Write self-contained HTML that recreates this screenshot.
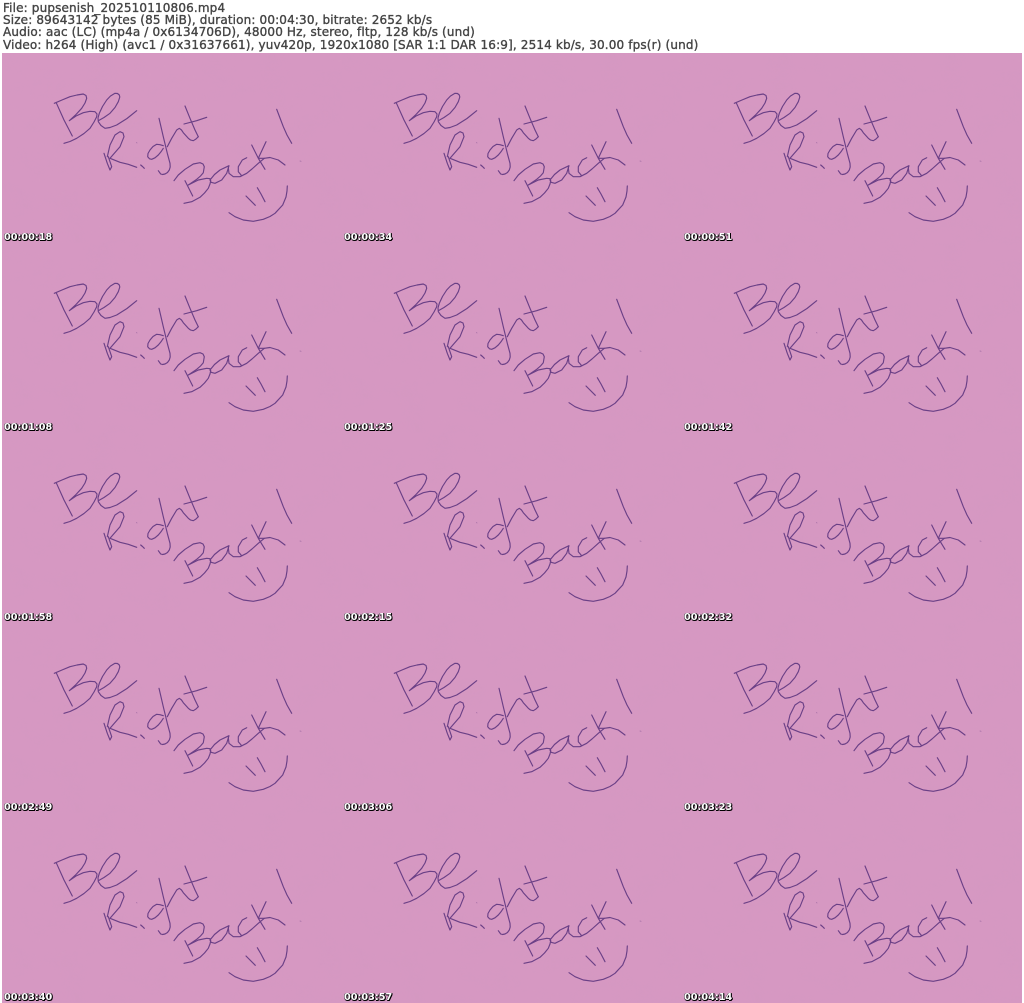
<!DOCTYPE html>
<html lang="en"><head><meta charset="utf-8"><title>pupsenish_202510110806.mp4 contact sheet</title>
<style>
html,body{margin:0;padding:0;background:#fff;width:1024px;height:1003px;overflow:hidden}
body{position:relative;font-family:"DejaVu Sans","Liberation Sans",sans-serif}
.h{position:absolute;left:3px;font-size:12px;line-height:12px;letter-spacing:.145px;color:#444;white-space:pre;-webkit-text-stroke:.35px #444}
svg{position:absolute;left:0;top:0}
.t{position:absolute;font-weight:bold;font-size:9.7px;line-height:12px;color:#fff;text-shadow:1px 1px 0 #000,0 1px 0 #000,1px 0 0 #000,-.5px 0 0 #333}
</style></head><body>
<div class="h" style="top:2px">File: pupsenish_202510110806.mp4</div>
<div class="h" style="top:14px">Size: 89643142 bytes (85 MiB), duration: 00:04:30, bitrate: 2652 kb/s</div>
<div class="h" style="top:26px">Audio: aac (LC) (mp4a / 0x6134706D), 48000 Hz, stereo, fltp, 128 kb/s (und)</div>
<div class="h" style="top:39px">Video: h264 (High) (avc1 / 0x31637661), yuv420p, 1920x1080 [SAR 1:1 DAR 16:9], 2514 kb/s, 30.00 fps(r) (und)</div>
<svg width="1024" height="1003" viewBox="0 0 1024 1003" role="img" aria-label="Fifteen video frames of a handwritten Be Right Back note on pink paper">
<filter id="n" x="0" y="0" width="100%" height="100%"><feTurbulence type="fractalNoise" baseFrequency=".035 .05" numOctaves="3" seed="4"/><feColorMatrix values="0 0 0 0 .6 0 0 0 0 .3 0 0 0 0 .5 1.2 0 0 0 -.45"/></filter>
<filter id="s" x="-5%" y="-5%" width="110%" height="110%"><feGaussianBlur stdDeviation=".3"/></filter>
<pattern id="tile" patternUnits="userSpaceOnUse" x="2" y="53" width="340" height="190">
<rect width="340" height="190" fill="#d698c2"/>
<rect width="340" height="190" filter="url(#n)" opacity=".2"/>
<g transform="translate(-2,-53)" filter="url(#s)" fill="none" stroke="#6b3f86" stroke-width="1.15" stroke-linecap="round" stroke-linejoin="round">
<path d="M54.300 103.300L62 100L70 96.700L77 95L83.300 94L86 95.500L86.700 98.300L85 103L81.700 108.300L76 114.500L69.300 120.700L76 116L83.300 112.700L90 111.300L95 111.700L97 114L96.700 116.700L94 122L90 128.300L84 133.500L76.700 138.300L70 141.500L64 143.300"/>
<path d="M56.500 103.300L64 120L72.300 136"/>
<path d="M98.300 120.700L104 117.500L110 113.300L115 107.500L118.300 101.700L119.800 97L119.300 95L117.500 93.500L115 93.300L110.500 96L106.700 100L102.500 106.500L99.300 113.300L98 118L98.300 121.700L101 125.500L105 128.300L110 127.500L116.700 125L127 118.500L136.700 110.700"/>
<path d="M104 153.300L107.300 163.300L110 170L111.700 166.700L108.300 156.700"/>
<path d="M107.300 156.700L110 145L115 135L120 131.700L123 133L124 136.700L120 146.700L110 158.300L120 162.300L128.300 164.300L136.700 167.300"/>
<path d="M140.700 165L142.500 166.500L144.300 168.300"/>
<path d="M163.300 145.700L160 144.700L156.700 144.300L153 146.500L150 150L148 153.500L147.700 156.700L149.500 158.800L151.700 159.300L155 157.800L158.300 155L161 151.800L163.300 148.300"/>
<path d="M159 118.300L163.300 136.700L167.300 153.300L170 163.300L170.200 167L169.300 170L167.500 172.500L165 174L162.500 174.500L160.700 174L158.300 170.700"/>
<path d="M167.300 146.700L171.700 138.300L176.700 130L179.300 128.300L181.500 130L183.300 132.700L188.300 138.300L190.500 140L193.300 140.700L196 139L198.300 136.700"/>
<path d="M185 106L190 118.300L195 130L198.300 136.700M184 124L196.700 120.700L206.700 117.300"/>
<path d="M174 180.700L178.300 175L185 169.300L193.300 164L200 162.700L203 164L204.300 166.700L203.300 172.700L200.500 176L196.700 179.300L188.300 185L198.300 180L206.700 178.300L210 178.700L210.700 180.700L210 184L208.300 188.300L204.500 193L200 197.300L191.700 201.700L184 203.300"/>
<path d="M185 180.700L192.700 196"/>
<path d="M210 180L214.500 174.500L220 170L229 165.700L226.700 173.300L221.700 180L215 183.300L211 182.300L210 180"/>
<path d="M228.300 167.700L229 173.300L233.300 176.700L240 176.700L246.700 173.300L252 169L258.300 163.300L264.300 158.300"/>
<path d="M246.700 157.700L242.300 160L238.300 166.700L238.300 171.700L241.700 175.700"/>
<path d="M251.700 145L258.300 158.300L265 169.300M266 141.700L258.300 158.300L264.300 158.300L270 157.500L278.300 160L285 165"/>
<path d="M246 196L255.300 205.300M257.300 187.700L261 194L265 201.700"/>
<path d="M229 212.700L235 216.700L243.300 220L253.300 221.300L263.300 219.300L270 216.500L275 213.300L282.700 205L286 197L287 191L287.300 186"/>
<path d="M276.700 109.300L280 118L283.300 126.700L287 135L291.700 143.300"/>
<path d="M300 161L301 161.300M136.500 142.500L137 143" stroke-width=".8" opacity=".5"/>
</g>
</pattern>
<rect x="2" y="53" width="1020" height="950" fill="url(#tile)"/>
</svg>
<div class="t" style="left:4px;top:232px">00:00:18</div><div class="t" style="left:344px;top:232px">00:00:34</div><div class="t" style="left:684px;top:232px">00:00:51</div>
<div class="t" style="left:4px;top:422px">00:01:08</div><div class="t" style="left:344px;top:422px">00:01:25</div><div class="t" style="left:684px;top:422px">00:01:42</div>
<div class="t" style="left:4px;top:612px">00:01:58</div><div class="t" style="left:344px;top:612px">00:02:15</div><div class="t" style="left:684px;top:612px">00:02:32</div>
<div class="t" style="left:4px;top:802px">00:02:49</div><div class="t" style="left:344px;top:802px">00:03:06</div><div class="t" style="left:684px;top:802px">00:03:23</div>
<div class="t" style="left:4px;top:992px">00:03:40</div><div class="t" style="left:344px;top:992px">00:03:57</div><div class="t" style="left:684px;top:992px">00:04:14</div>
</body></html>
